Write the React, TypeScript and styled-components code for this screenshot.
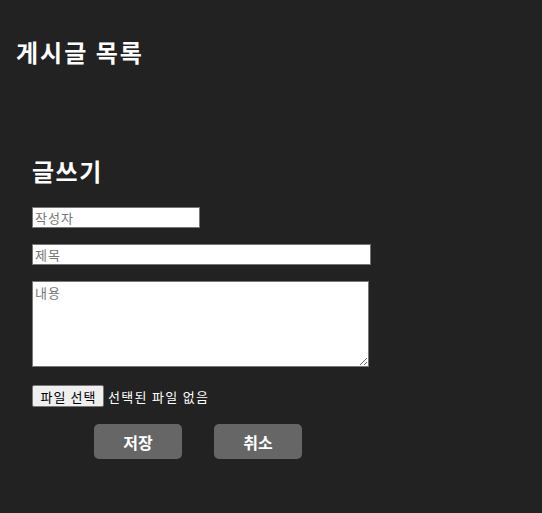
import styled, { createGlobalStyle } from 'styled-components'

const GlobalStyle = createGlobalStyle`
  body {
    margin: 0;
    background: #222222;
    font-family: 'Noto Sans CJK KR', 'Noto Sans', sans-serif;
  }
`

const Page = styled.main`
  min-height: 513px;
  box-sizing: border-box;
  padding: 36px 16px;
  background: #222222;
  color: #fff;
`

const PageTitle = styled.h1`
  margin: 0;
  font-size: 24px;
  line-height: 32px;
  font-weight: 700;
  letter-spacing: 2px;
`

const WriteForm = styled.form`
  display: flex;
  flex-direction: column;
  align-items: flex-start;
  margin-top: 87px;
  padding-left: 16px;
`

const FormTitle = styled.h2`
  margin: 0 0 20px;
  font-size: 24px;
  line-height: 32px;
  font-weight: 700;
  letter-spacing: 1.5px;
`

const Field = styled.input<{ $width: number }>`
  box-sizing: border-box;
  width: ${(p) => p.$width}px;
  height: 21px;
  margin-bottom: 16px;
  padding: 1px 2px;
  border: 1px solid #767676;
  background: #fff;
  font-family: 'Noto Sans CJK KR', sans-serif;
  font-size: 13px;
  line-height: 17px;
  letter-spacing: 1px;
  outline: none;

  &::placeholder {
    color: #757575;
  }
`

const Content = styled.textarea`
  box-sizing: border-box;
  width: 337px;
  height: 86px;
  margin: 0 0 18px;
  padding: 2px;
  border: 1px solid #767676;
  background: #fff;
  font-family: 'Noto Sans CJK KR', sans-serif;
  font-size: 13px;
  line-height: 17px;
  letter-spacing: 1px;
  resize: both;
  outline: none;

  &::placeholder {
    color: #757575;
  }
`

const FileRow = styled.div`
  display: flex;
  align-items: center;
  gap: 4px;
  height: 22px;
  margin-bottom: 17px;
  font-size: 13px;
`

const FileButton = styled.button`
  box-sizing: border-box;
  width: 72px;
  height: 22px;
  padding: 0 0 0 1px;
  border: 1px solid #767676;
  border-radius: 2px;
  background: #efefef;
  color: #000;
  font-family: 'Noto Sans CJK KR', sans-serif;
  font-size: 13px;
  letter-spacing: 1px;
`

const FileLabel = styled.span`
  color: #fff;
  letter-spacing: 1.3px;
`

const Actions = styled.div`
  display: flex;
  gap: 32px;
  padding-left: 62px;
`

const ActionButton = styled.button`
  width: 88px;
  height: 35px;
  border: none;
  border-radius: 5px;
  background: #666666;
  color: #fff;
  font-family: 'Noto Sans CJK KR', sans-serif;
  font-size: 16px;
  font-weight: 700;
  cursor: pointer;
`

export default function App() {
  return (
    <>
      <GlobalStyle />
      <Page>
        <PageTitle>게시글 목록</PageTitle>
        <WriteForm onSubmit={(e) => e.preventDefault()}>
          <FormTitle>글쓰기</FormTitle>
          <Field $width={168} placeholder="작성자" />
          <Field $width={339} placeholder="제목" />
          <Content placeholder="내용" />
          <FileRow>
            <FileButton type="button">파일 선택</FileButton>
            <FileLabel>선택된 파일 없음</FileLabel>
          </FileRow>
          <Actions>
            <ActionButton type="submit">저장</ActionButton>
            <ActionButton type="button">취소</ActionButton>
          </Actions>
        </WriteForm>
      </Page>
    </>
  )
}
